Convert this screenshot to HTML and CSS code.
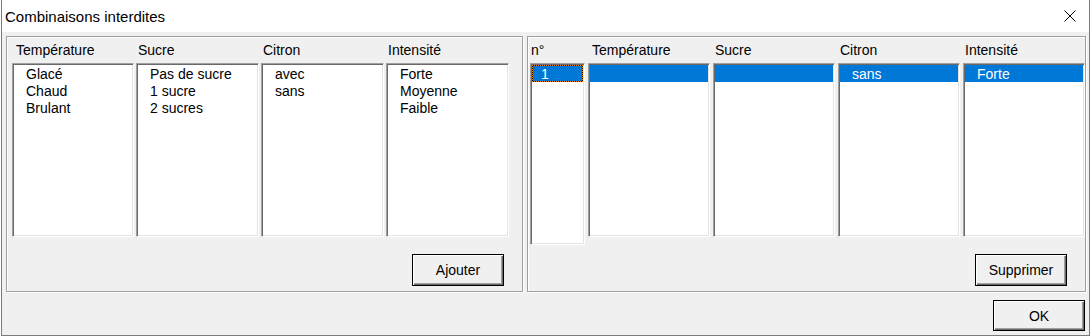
FILE: index.html
```html
<!DOCTYPE html>
<html lang="fr">
<head>
  <meta charset="UTF-8">
  <title>Combinaisons interdites</title>
  <link rel="stylesheet" href="styles.css">
</head>
<body>

<div class="window">
  <div class="titlebar">
    <span class="title">Combinaisons interdites</span>
    <svg class="close" width="12" height="12" viewBox="0 0 12 12">
      <path d="M0.5 0.5 L11.5 11.5 M11.5 0.5 L0.5 11.5" stroke="#000" stroke-width="1" fill="none"/>
    </svg>
  </div>

  <div class="panels">
    <div class="frame frame-left">
      <div class="cols cols-left">
        <div class="col">
          <div class="col-head col-head-first">Température</div>
          <div class="list">
            <div class="row">Glacé</div>
            <div class="row">Chaud</div>
            <div class="row">Brulant</div>
          </div>
        </div>
        <div class="col">
          <div class="col-head">Sucre</div>
          <div class="list">
            <div class="row">Pas de sucre</div>
            <div class="row">1 sucre</div>
            <div class="row">2 sucres</div>
          </div>
        </div>
        <div class="col">
          <div class="col-head">Citron</div>
          <div class="list">
            <div class="row">avec</div>
            <div class="row">sans</div>
          </div>
        </div>
        <div class="col">
          <div class="col-head">Intensité</div>
          <div class="list">
            <div class="row">Forte</div>
            <div class="row">Moyenne</div>
            <div class="row">Faible</div>
          </div>
        </div>
      </div>
      <div class="actions">
        <button class="btn">Ajouter</button>
      </div>
    </div>

    <div class="frame frame-right">
      <div class="cols cols-right">
        <div class="col">
          <div class="col-head col-head-num">n°</div>
          <div class="list list-num">
            <div class="row row-num selected focus">1</div>
          </div>
        </div>
        <div class="col">
          <div class="col-head col-head-first">Température</div>
          <div class="list">
            <div class="row selected">&nbsp;</div>
          </div>
        </div>
        <div class="col">
          <div class="col-head">Sucre</div>
          <div class="list">
            <div class="row selected">&nbsp;</div>
          </div>
        </div>
        <div class="col">
          <div class="col-head">Citron</div>
          <div class="list">
            <div class="row selected">sans</div>
          </div>
        </div>
        <div class="col">
          <div class="col-head">Intensité</div>
          <div class="list">
            <div class="row selected">Forte</div>
          </div>
        </div>
      </div>
      <div class="actions">
        <button class="btn">Supprimer</button>
      </div>
    </div>
  </div>

  <div class="footer">
    <button class="btn btn-ok">OK</button>
  </div>
</div>

</body>
</html>
```
FILE: styles.css
```css
body {
  margin: 0;
  background: #fff;
  font-family: "Liberation Sans", Arial, sans-serif;
  font-size: 14px;
  color: #000;
}
.window {
  width: 1089px;
  height: 336px;
  margin-left: 1px;
  box-sizing: border-box;
  border: 1px solid #7a7a7a;
  border-top: none;
  background: #f0f0f0;
  display: flex;
  flex-direction: column;
}
.titlebar {
  height: 32px;
  flex: none;
  background: #fff;
  display: flex;
  align-items: center;
  justify-content: space-between;
  padding: 1px 13px 0 3px;
  box-sizing: border-box;
}
.title {
  font-size: 15px;
}
.close {
  display: block;
  margin-top: -1px;
}
.panels {
  display: flex;
  gap: 4px;
  padding: 4px 3px 0 4px;
}
.frame {
  height: 256px;
  box-sizing: border-box;
  border: 1px solid #a0a0a0;
  box-shadow: inset 1px 1px 0 #fff, 1px 1px 0 #fff;
  display: flex;
  flex-direction: column;
  padding-top: 5px;
  padding-bottom: 5px;
}
.frame-left {
  width: 517px;
  padding-left: 5px;
}
.frame-right {
  width: 559px;
  padding-left: 2px;
}
.cols {
  display: grid;
  align-items: start;
}
.cols-left {
  grid-template-columns: 122px 123px 123px 123px;
  column-gap: 2px;
}
.cols-right {
  grid-template-columns: 55px repeat(4, 122px);
  column-gap: 3px;
}
.col-head {
  line-height: 16px;
  margin-bottom: 5px;
  padding-left: 2px;
  white-space: nowrap;
}
.col-head-first {
  padding-left: 4px;
}
.col-head-num {
  padding-left: 1px;
}
.list {
  height: 174px;
  box-sizing: border-box;
  background: #fff;
  border: 1px solid;
  border-color: #a0a0a0 #fff #fff #a0a0a0;
  box-shadow: inset 1px 1px 0 #696969, inset -1px -1px 0 #e3e3e3;
  padding: 1px;
}
.list-num {
  height: 182px;
}
.row {
  height: 17px;
  box-sizing: border-box;
  padding: 1px 0 0 12px;
  line-height: 16px;
  white-space: nowrap;
}
.row-num {
  padding-left: 9px;
}
.selected {
  background: #0078d7;
  color: #fff;
}
.focus {
  border: 1px dotted #ff8c00;
  background: linear-gradient(#0078d7, #0078d7) padding-box, #000;
  padding-top: 0;
  padding-left: 8px;
}
.actions {
  margin-top: auto;
  display: flex;
  justify-content: flex-end;
  padding-right: 18px;
}
.btn {
  width: 92px;
  height: 32px;
  border: 1px solid #000;
  background: #f0f0f0;
  box-shadow: inset 1px 1px 0 #fff, inset -1px -1px 0 #696969, inset -2px -2px 0 #a0a0a0;
  font-family: inherit;
  font-size: 14px;
  color: #000;
  padding: 0;
}
.footer {
  display: flex;
  justify-content: flex-end;
  padding: 8px 4px 0 0;
}
.btn-ok {
  height: 31px;
}
```
